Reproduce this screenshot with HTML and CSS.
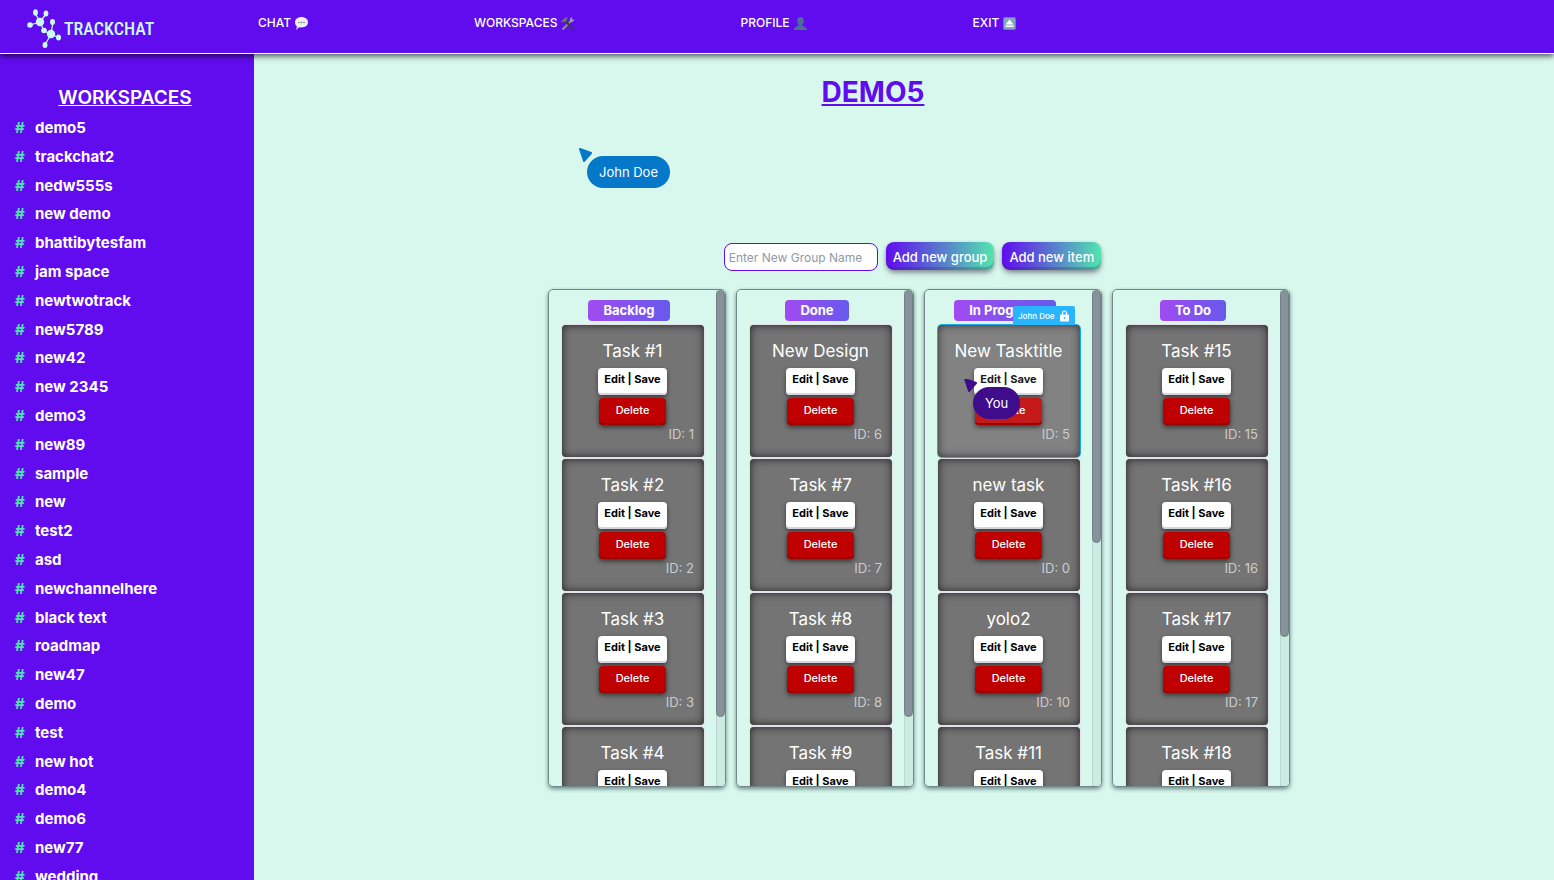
FILE: index.html
```html
<!DOCTYPE html>
<html lang="en">
<head>
<meta charset="utf-8">
<title>Trackchat</title>
<link rel="stylesheet" href="styles.css">
</head>
<body>
<header class="topbar">
  <a class="brand" href="#">
    <svg class="brand-mark" width="35" height="40" viewBox="0 0 35 40" aria-hidden="true">
      <g fill="#c9fbf2">
        <path d="M13 13 8 4M13 13 19 5M13 13 3 16M13 13 17 22M24 25 17 22M24 25 26 13M24 25 32 29M24 25 18 36" fill="none" stroke="#c9fbf2" stroke-width="1.300"/>
        <circle cx="13" cy="13" r="4.200"/><circle cx="24" cy="25" r="4.200"/>
        <ellipse cx="8.500" cy="3.500" rx="2.400" ry="3.200"/><ellipse cx="19" cy="4.500" rx="2.400" ry="3"/><circle cx="3" cy="16" r="2.800"/><circle cx="17" cy="21.500" r="2.800"/>
        <ellipse cx="25.500" cy="13" rx="2.500" ry="3"/><ellipse cx="31.500" cy="28.500" rx="2.500" ry="3"/><ellipse cx="18" cy="36" rx="2.500" ry="3"/>
      </g>
    </svg>
    <span>TRACKCHAT</span>
  </a>
  <nav class="nav">
    <a href="#">CHAT
      <svg width="15" height="15" viewBox="0 0 15 15" aria-hidden="true"><path d="M7.500 1C11.500 1 14 3.300 14 6.300S11.500 11.500 7.500 11.500L5 11.300 2 14 3 10.500C1.500 9.500 1 8 1 6.300 1 3.300 3.500 1 7.500 1Z" fill="#eee"/><g fill="#777"><circle cx="5" cy="6.500" r=".8"/><circle cx="7.500" cy="6.500" r=".8"/><circle cx="10" cy="6.500" r=".8"/></g></svg>
    </a>
    <a href="#">WORKSPACES
      <svg width="15" height="15" viewBox="0 0 15 15" aria-hidden="true"><path d="M3 13 11.500 4.500" stroke="#8b9198" stroke-width="2" stroke-linecap="round"/><path d="M10 5C9.500 3 10.500 1.500 12.500 1L11.800 3 13 4 14.300 3C14.500 5 12.500 6.500 10.500 5.800Z" fill="#9aa0a6"/><path d="M5.500 5 13 13" stroke="#3c3844" stroke-width="2.200" stroke-linecap="round"/><path d="M1 5.500 5.500 1.300 8.500 1.500 6.500 3 7 4.300 4.500 6.500 3.600 5.300 2.400 6.800Z" fill="#6d7278"/></svg>
    </a>
    <a href="#">PROFILE
      <svg width="15" height="15" viewBox="0 0 15 15" aria-hidden="true"><path d="M7.500 1C9.800 1 11 2.600 10.800 5 10.600 7.200 9.700 8 9.300 9 9.300 10.700 14 10.200 14 14H1C1 10.200 5.700 10.700 5.700 9 5.300 8 4.400 7.200 4.200 5 4 2.600 5.200 1 7.500 1Z" fill="#4c6e96"/></svg>
    </a>
    <a href="#">EXIT
      <svg width="15" height="15" viewBox="0 0 15 15" aria-hidden="true"><rect x="1" y="1" width="13" height="13" rx="2" fill="#5f87a3"/><rect x="2" y="2" width="11" height="11" rx="1" fill="#83a8c0"/><path d="M7.500 3.500 11.500 8.500H3.500ZM3.500 9.500H11.500V11H3.500Z" fill="#fff"/></svg>
    </a>
  </nav>
</header>
<div class="layout">
  <aside class="sidebar">
    <h2>WORKSPACES</h2>
    <ul class="channels" id="channels"></ul>
  </aside>
  <main class="main">
    <h1>DEMO5</h1>
    <form class="toolbar">
      <input type="text" placeholder="Enter New Group Name" aria-label="New group name">
      <button type="button">Add new group</button>
      <button type="button">Add new item</button>
    </form>
    <section class="board" id="board"></section>
    <div class="cursor cursor-john">
      <svg width="15" height="16" viewBox="0 0 15 16" aria-hidden="true"><path d="M2 1 13 5 6 13Z" fill="currentColor" stroke="currentColor" stroke-width="2" stroke-linejoin="round"/></svg>
      <span>John Doe</span>
    </div>
  </main>
</div>
<script src="app.js"></script>
</body>
</html>
```
FILE: styles.css
```css
* { box-sizing: border-box; }
body {
  margin: 0;
  height: 100vh;
  display: flex;
  flex-direction: column;
  overflow: hidden;
  background: #d9f8ed;
  color: #fff;
  font-family: Inter, "Liberation Sans", sans-serif;
}
a { color: inherit; text-decoration: none; }
button, input { font: inherit; }

.topbar {
  position: relative;
  z-index: 2;
  flex: none;
  display: flex;
  height: 54px;
  background: #610bef;
  border-bottom: 1px solid #fff;
  box-shadow: 0 2px 6px rgba(0, 0, 0, .7);
}
.brand {
  display: flex;
  align-items: center;
  gap: 2px;
  width: 258px;
  padding: 4px 0 0 27px;
  color: #c9fbf2;
  font-family: "Roboto Condensed", "Open Sans Condensed", "Liberation Sans Narrow", "Liberation Sans", sans-serif;
  font-size: 18px;
  font-weight: 500;
}
.nav { display: flex; gap: 165px; padding-top: 15px; font-size: 12px; font-weight: 500; line-height: 16px; }
.nav a { display: flex; align-items: center; gap: 3px; height: 16px; }

.layout { flex: 1; display: flex; min-height: 0; }
.sidebar { flex: none; width: 254px; padding: 30px 15px 0; background: #610bef; overflow: hidden; }
.sidebar h2 {
  margin: 0 4px 3px 0;
  padding-top: 1px;
  text-align: center;
  font-size: 19px;
  font-weight: 600;
  line-height: 26px;
  text-decoration: underline;
}
.channels { margin: 0; padding: 0; list-style: none; font-weight: 700; line-height: 1.8em; }
.channels a { display: flex; font-size: 15px; }
.channels a::before { content: "#"; width: 20px; color: #4fe0b4; }

.main { position: relative; flex: 1; }
h1 {
  margin: 0;
  padding: 20px 62px 0 0;
  text-align: center;
  color: #610bef;
  font-size: 28px;
  font-weight: 700;
  line-height: 36px;
  text-decoration: underline;
}
.toolbar { display: flex; justify-content: center; align-items: center; gap: 8px; margin: 131px 0 0; padding-left: 17px; }
.toolbar input {
  width: 154px;
  height: 28px;
  margin-top: 2px;
  padding: 0 4px;
  border: 1px solid #610bef;
  border-radius: 8px;
  background: #fff;
  font-size: 12px;
}
.toolbar input::placeholder { color: #9199a6; }
.toolbar button {
  height: 28px;
  padding: 1px 7px 0;
  border: 0;
  border-radius: 8px;
  color: #fff;
  font-size: 13px;
  font-weight: 500;
  background: linear-gradient(90deg, #610bef, #52e5ae);
  box-shadow: 0 2px 4px rgba(45, 35, 66, .4), 0 5px 9px -3px rgba(45, 35, 66, .3), inset 0 -3px 0 rgba(45, 35, 66, .25);
}

.board { display: flex; justify-content: center; gap: 10px; margin-top: 18px; padding-left: 30px; }
.column {
  display: flex;
  width: 178px;
  height: 498px;
  border: 1px solid #71878c;
  border-radius: 5px;
  overflow: hidden;
  box-shadow: 0 2px 4px rgba(30, 60, 70, .6);
}
.column-body { flex: 1; padding: 10px 12px 0 13px; overflow: hidden; }
.track { width: 9px; border-left: 1px solid #b9d9d0; background: #cdebe1; }
.thumb { width: 9px; margin-left: -1px; border: 1px solid #718087; border-radius: 5px; background: #87929a; }
.column h3 {
  width: fit-content;
  margin: 0 auto 4px;
  padding: 0 15px;
  border-radius: 4px;
  background: linear-gradient(90deg, #a14bf1, #6759ec);
  font-size: 13px;
  font-weight: 700;
  line-height: 21px;
  position: relative;
  right: 4px;
}
.card {
  position: relative;
  display: flex;
  flex-direction: column;
  align-items: center;
  width: 142px;
  height: 132px;
  margin-bottom: 2px;
  padding: 14px 10px 0 9px;
  border-radius: 4px;
  background: #747474;
  box-shadow: inset 0 0 9px #222, 0 0 0 1px #e4e2e8;
}
.card h4 { margin: 0 0 5px; font-size: 17px; font-weight: 400; line-height: 24px; white-space: nowrap; }
.card button {
  height: 27px;
  padding: 0 6px 5px;
  border: 0;
  border-radius: 4px;
  font-size: 11px;
  box-shadow: 0 2px 4px rgba(0, 0, 0, .5), inset 0 -2px 0 #d6d6e0;
}
.edit { margin-bottom: 3px; background: #fff; color: #000; font-weight: 700; }
.card .delete { width: 67px; padding-bottom: 3px; background: #be0000; color: #fff; font-weight: 500; box-shadow: 0 2px 5px rgba(0, 0, 0, .6), inset 0 -2px 0 #9e0000; }
.card p { align-self: flex-end; margin: 1px 0 0; color: #ccc; font-size: 13px; line-height: 17px; }

.locked { z-index: 1; background: #828282; box-shadow: inset 0 0 9px #333, 0 0 0 1px #1fa9ed; }
.locked .edit { color: #1a1a1a; }
.locked .delete { background: #c41a1a; }
.lock-tag {
  position: absolute;
  top: -19px;
  right: 5px;
  display: flex;
  align-items: center;
  justify-content: space-between;
  width: 62px;
  height: 19px;
  padding: 0 6px 0 5px;
  border-radius: 2px 2px 0 0;
  background: #29b6ff;
  font-size: 8px;
  font-weight: 500;
}
.cursor { position: absolute; font-size: 13px; line-height: 32px; }
.cursor svg { display: block; }
.cursor span {
  display: block;
  margin: -8px 0 0 9px;
  padding: 0 12px;
  border-radius: 16px;
  background: currentColor;
}
.cursor span::first-line { color: #fff; }
.cursor-john { top: 94px; left: 324px; color: #0578ca; }
.cursor-you { top: 54px; left: 26px; color: #3f0d8c; }
```
FILE: app.js
```js
const channels = ["demo5", "trackchat2", "nedw555s", "new demo", "bhattibytesfam", "jam space", "newtwotrack", "new5789", "new42", "new 2345", "demo3", "new89", "sample", "new", "test2", "asd", "newchannelhere", "black text", "roadmap", "new47", "demo", "test", "new hot", "demo4", "demo6", "new77", "wedding"];
const groups = [
  { name: "Backlog", thumb: 86, tasks: [["Task #1", 1], ["Task #2", 2], ["Task #3", 3], ["Task #4", 4]] },
  { name: "Done", thumb: 86, tasks: [["New Design", 6], ["Task #7", 7], ["Task #8", 8], ["Task #9", 9]] },
  { name: "In Progress", thumb: 51, tasks: [["New Tasktitle", 5, "John Doe"], ["new task", 0], ["yolo2", 10], ["Task #11", 11]] },
  { name: "To Do", thumb: 70, tasks: [["Task #15", 15], ["Task #16", 16], ["Task #17", 17], ["Task #18", 18]] }
];
const lock = (who) => `
  <div class="lock-tag">${who}
    <svg width="9" height="12" viewBox="0 0 9 12" aria-hidden="true"><path d="M2.500 5V3a2 2 0 0 1 4 0V5" fill="none" stroke="#fff" stroke-width="1.200"/><rect y="4.500" width="9" height="7" rx="1" fill="#fff"/><circle cx="4.500" cy="8" r=".9" fill="#29b6ff"/></svg>
  </div>
  <div class="cursor cursor-you">
    <svg width="15" height="16" viewBox="0 0 15 16" aria-hidden="true"><path d="M1 0 12 4 5 12Z" fill="currentColor" stroke="currentColor" stroke-width="2" stroke-linejoin="round"/></svg>
    <span>You</span>
  </div>`;
const card = ([title, id, who]) => `
  <article class="card${who ? " locked" : ""}">
    <h4>${title}</h4>
    <button class="edit" type="button">Edit | Save</button>
    <button class="delete" type="button">Delete</button>
    <p>ID: ${id}</p>${who ? lock(who) : ""}
  </article>`;
document.getElementById("channels").innerHTML = channels.map((c) => `<li><a href="#">${c}</a></li>`).join("");
document.getElementById("board").innerHTML = groups.map((g) => `
  <div class="column">
    <div class="column-body"><h3>${g.name}</h3>${g.tasks.map(card).join("")}</div>
    <div class="track"><div class="thumb" style="height:${g.thumb}%"></div></div>
  </div>`).join("");
```
